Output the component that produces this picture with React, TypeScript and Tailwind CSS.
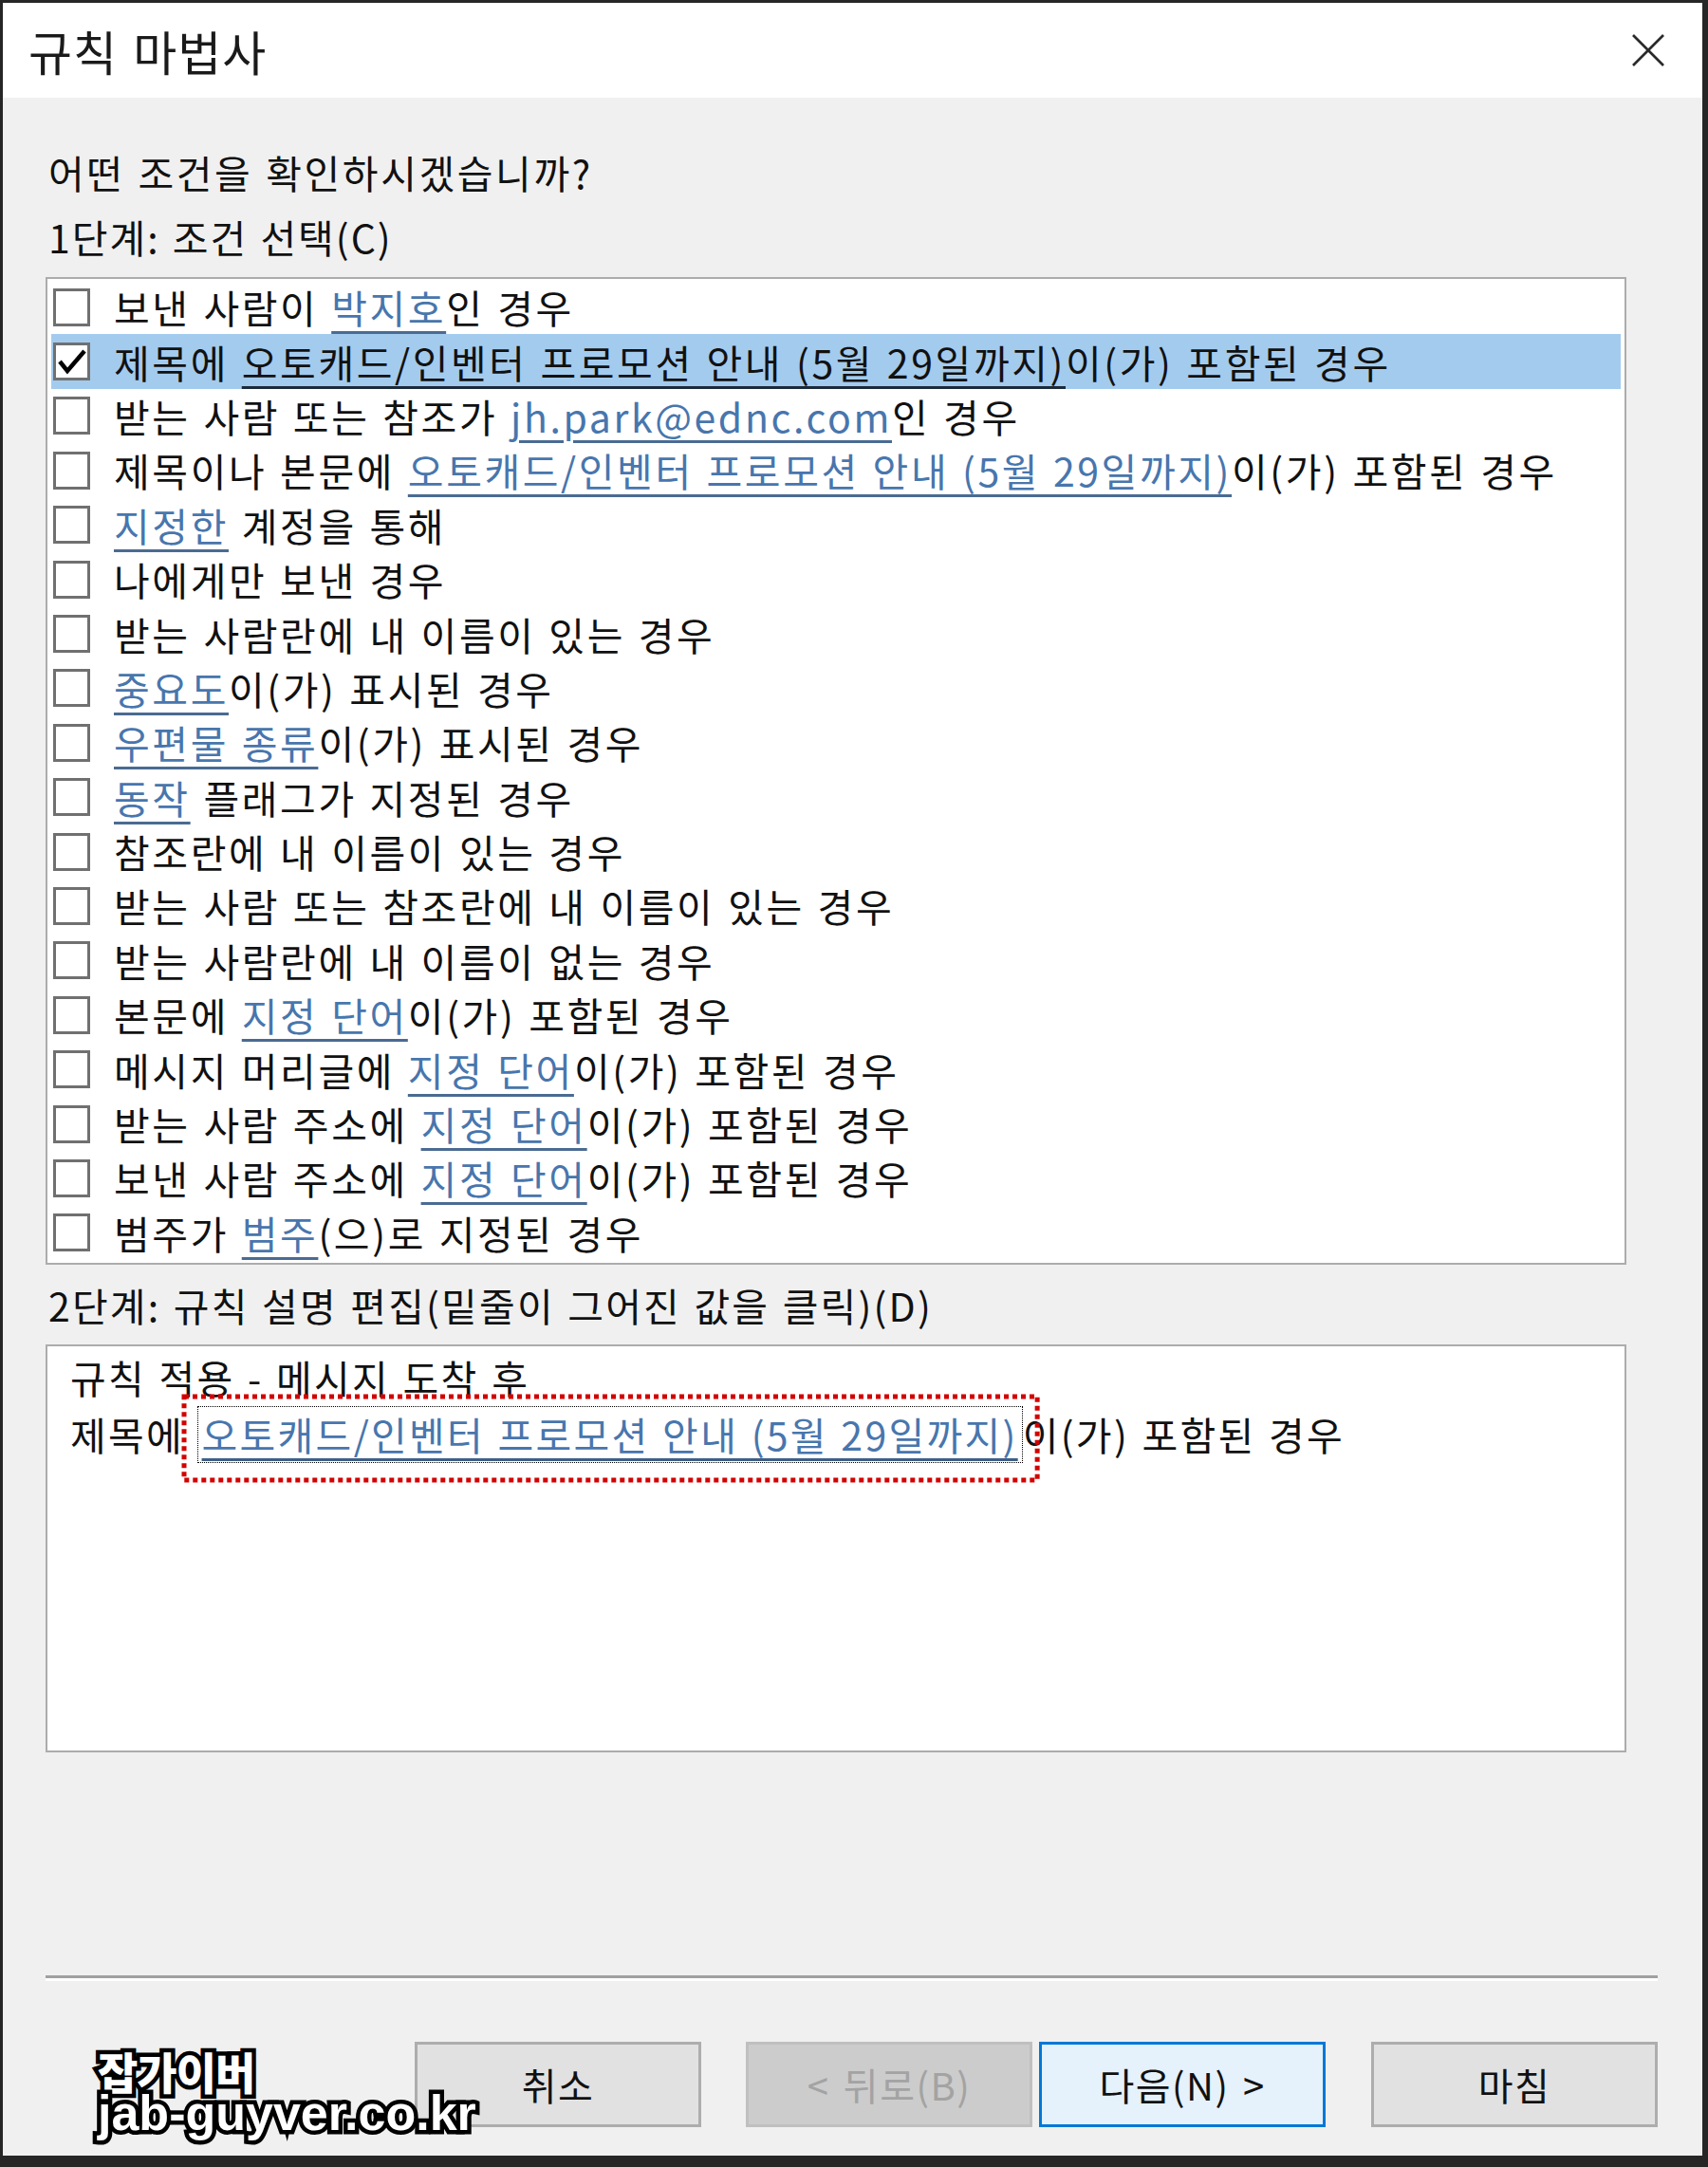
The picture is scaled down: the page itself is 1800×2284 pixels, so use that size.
import React from "react";

type Seg = string | { l: string };

const rows: Seg[][] = [
  ["보낸 사람이 ", { l: "박지호" }, "인 경우"],
  ["제목에 ", { l: "오토캐드/인벤터 프로모션 안내 (5월 29일까지)" }, "이(가) 포함된 경우"],
  ["받는 사람 또는 참조가 ", { l: "jh.park@ednc.com" }, "인 경우"],
  ["제목이나 본문에 ", { l: "오토캐드/인벤터 프로모션 안내 (5월 29일까지)" }, "이(가) 포함된 경우"],
  [{ l: "지정한" }, " 계정을 통해"],
  ["나에게만 보낸 경우"],
  ["받는 사람란에 내 이름이 있는 경우"],
  [{ l: "중요도" }, "이(가) 표시된 경우"],
  [{ l: "우편물 종류" }, "이(가) 표시된 경우"],
  [{ l: "동작" }, " 플래그가 지정된 경우"],
  ["참조란에 내 이름이 있는 경우"],
  ["받는 사람 또는 참조란에 내 이름이 있는 경우"],
  ["받는 사람란에 내 이름이 없는 경우"],
  ["본문에 ", { l: "지정 단어" }, "이(가) 포함된 경우"],
  ["메시지 머리글에 ", { l: "지정 단어" }, "이(가) 포함된 경우"],
  ["받는 사람 주소에 ", { l: "지정 단어" }, "이(가) 포함된 경우"],
  ["보낸 사람 주소에 ", { l: "지정 단어" }, "이(가) 포함된 경우"],
  ["범주가 ", { l: "범주" }, "(으)로 지정된 경우"],
];

function Checkbox({ checked }: { checked?: boolean }) {
  return (
    <div className="w-[39px] h-[40px] shrink-0 border-[3px] border-[#707070] bg-white flex items-center justify-center">
      {checked && (
        <svg width="32" height="32" viewBox="0 0 32 32">
          <polyline points="3,16 11,26 29,5" fill="none" stroke="#000" strokeWidth="4.5" strokeLinejoin="miter" />
        </svg>
      )}
    </div>
  );
}

function Row({ segs, selected }: { segs: Seg[]; selected?: boolean }) {
  return (
    <div className={`h-[57.4px] flex items-center pl-[2px] ${selected ? "bg-[#a3cbee]" : ""}`}>
      <Checkbox checked={selected} />
      <div className="ml-[25px] whitespace-pre text-[41px] leading-none text-[#111] tracking-[2.6px] [word-spacing:2px]">
        {segs.map((s, i) =>
          typeof s === "string" ? (
            <span key={i}>{s}</span>
          ) : (
            <span
              key={i}
              className={
                selected
                  ? "text-[#111] underline decoration-[3px] decoration-[#1b2a3a] underline-offset-[8px]"
                  : "text-[#4876ad] underline decoration-[3px] decoration-[#4a6b92] underline-offset-[8px]"
              }
            >
              {s.l}
            </span>
          )
        )}
      </div>
    </div>
  );
}

function Button({ label, variant }: { label: string; variant?: "disabled" | "primary" }) {
  const cls =
    variant === "disabled"
      ? "bg-[#cccccc] border-[#bfbfbf] text-[#a3a3a3]"
      : variant === "primary"
      ? "bg-[#e5f1fb] border-[#0078d7] text-[#111]"
      : "bg-[#e1e1e1] border-[#adadad] text-[#111]";
  return (
    <div
      className={`w-[302px] h-[90px] border-[3px] flex items-center justify-center text-[40px] tracking-[1.5px] [word-spacing:4px] whitespace-pre ${cls}`}
    >
      {label}
    </div>
  );
}

export default function App() {
  return (
    <div className="w-[1800px] h-[2284px] bg-[#262626] pt-[3px] pl-[3px] font-['Noto_Sans_CJK_KR','Noto_Sans',sans-serif]">
      <div className="w-[1791px] h-[2269px] bg-[#f0f0f0] relative overflow-hidden">
        {/* title bar */}
        <div className="h-[100px] bg-white flex items-center justify-between pl-[27px] pr-[40px]">
          <div className="text-[50px] leading-none text-[#1a1a1a] tracking-[1px] [word-spacing:4px]">규칙 마법사</div>
          <svg width="34" height="34" viewBox="0 0 34 34">
            <line x1="1" y1="1" x2="33" y2="33" stroke="#2a2a2a" strokeWidth="2.6" />
            <line x1="33" y1="1" x2="1" y2="33" stroke="#2a2a2a" strokeWidth="2.6" />
          </svg>
        </div>

        <div className="px-[45px] tracking-[2.6px] [word-spacing:2px]">
          <div className="mt-[45px] h-[68px] flex items-center pl-[3px] text-[41px] text-[#111]">어떤 조건을 확인하시겠습니까?</div>
          <div className="h-[68px] flex items-center pl-[3px] text-[41px] text-[#111] tracking-[2px]">1단계: 조건 선택(C)</div>

          <div className="mt-[8px] w-[1666px] h-[1041px] bg-white border-2 border-[#acacac] px-[4px] pt-[1px]">
            {rows.map((r, i) => (
              <Row key={i} segs={r} selected={i === 1} />
            ))}
          </div>

          <div className="mt-[9px] h-[68px] flex items-center pl-[3px] text-[41px] text-[#111] tracking-[2.2px]">
            2단계: 규칙 설명 편집(밑줄이 그어진 값을 클릭)(D)
          </div>

          <div className="mt-[7px] w-[1666px] h-[430px] bg-white border-2 border-[#acacac] pl-[24px] pt-[3px] text-[41px] text-[#111] tracking-[2.3px]">
            <div className="h-[60px] flex items-center whitespace-pre">규칙 적용 - 메시지 도착 후</div>
            <div className="h-[60px] flex items-center whitespace-pre">
              <span>제목에 </span>
              <span className="relative h-[60px] flex items-center border border-dotted border-black px-[4px]">
                <span className="text-[#4876ad] underline decoration-[3px] decoration-[#3f5f86] underline-offset-[8px]">
                  오토캐드/인벤터 프로모션 안내 (5월 29일까지)
                </span>
                <div className="absolute -left-[14.5px] -right-[16.5px] -top-[11.5px] -bottom-[18.5px]">
                  <svg className="absolute inset-0 w-full h-full overflow-visible">
                    <rect x="0" y="0" width="100%" height="100%" fill="none" stroke="#d30000" strokeWidth="5" strokeDasharray="5 4" />
                  </svg>
                </div>
              </span>
              <span>이(가) 포함된 경우</span>
            </div>
          </div>
        </div>

        {/* separator */}
        <div className="ml-[45px] mt-[235px] w-[1699px]">
          <div className="h-[3px] bg-[#a0a0a0]" />
          <div className="h-[3px] bg-white" />
        </div>

        {/* buttons */}
        <div className="ml-[45px] mt-[64px] w-[1699px] flex justify-end">
          <div className="mr-[47px]">
            <Button label="취소" />
          </div>
          <div className="mr-[7px]">
            <Button label="< 뒤로(B)" variant="disabled" />
          </div>
          <div className="mr-[48px]">
            <Button label="다음(N) >" variant="primary" />
          </div>
          <Button label="마침" />
        </div>

        {/* watermark */}
        <div className="absolute left-[100px] top-[2156px] leading-none text-white font-black [-webkit-text-stroke:9px_#000] [paint-order:stroke_fill]">
          <div className="text-[46px] tracking-[-1px]">잡가이버</div>
          <div className="text-[52px] tracking-[0px] -mt-[4px] font-['Liberation_Sans',sans-serif]">jab-guyver.co.kr</div>
        </div>
      </div>
    </div>
  );
}
